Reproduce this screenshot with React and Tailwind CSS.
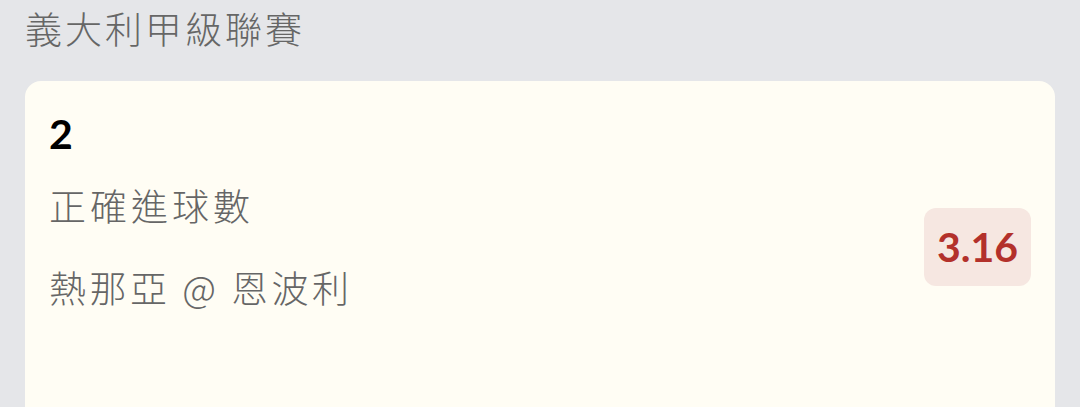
export default function App() {
  return (
    <div
      className="w-[1080px] h-[407px] overflow-hidden bg-[#e5e6e9] px-[25px]"
      style={{ fontFamily: '"Noto Sans CJK TC", sans-serif' }}
    >
      <div className="h-[81px] text-[37px] leading-[56px] font-light text-[#666666] tracking-[3px]">
        義大利甲級聯賽
      </div>
      <div className="bg-[#fffdf4] rounded-[16px] h-[360px] pl-[24px] pr-[24px] pt-[31px] flex items-start justify-between">
        <div className="flex flex-col">
          <div
            className="text-[41px] leading-[44px] font-bold text-black"
            style={{ fontFamily: 'Lato, "Noto Sans CJK TC", sans-serif' }}
          >
            2
          </div>
          <div className="mt-[23px] text-[37px] leading-[52px] font-light text-[#666666] tracking-[4px]">
            正確進球數
          </div>
          <div className="mt-[30px] text-[37px] leading-[52px] font-light text-[#666666] tracking-[3.5px]">
            熱那亞 @ 恩波利
          </div>
        </div>
        <div
          className="mt-[96px] w-[107px] h-[78px] rounded-[12px] bg-[#f6e7e1] flex items-center justify-center text-[41px] font-bold text-[#b3312b]"
          style={{ fontFamily: 'Lato, sans-serif' }}
        >
          3.16
        </div>
      </div>
    </div>
  );
}
